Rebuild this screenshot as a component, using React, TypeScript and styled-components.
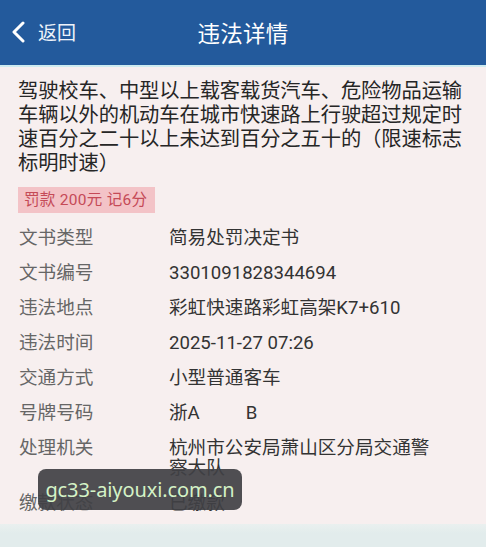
import React from "react";
import styled, { createGlobalStyle } from "styled-components";

const Global = createGlobalStyle`
  html, body { margin: 0; padding: 0; }
  body {
    width: 486px;
    height: 547px;
    overflow: hidden;
    background: #f7efef;
    font-family: Roboto, "Noto Sans CJK SC", "Noto Sans", sans-serif;
  }
`;

const Page = styled.div`
  position: relative;
  width: 486px;
  height: 547px;
  display: flex;
  flex-direction: column;
  background: #f7efef;
  overflow: hidden;
`;

const Header = styled.header`
  flex: none;
  height: 67px;
  box-sizing: border-box;
  background: #235a9c;
  border-bottom: 2px solid #cdebf0;
  display: grid;
  grid-template-columns: 1fr auto 1fr;
  align-items: center;
  padding-bottom: 2px;
  color: #fff;
`;

const Back = styled.div`
  display: flex;
  align-items: center;
  gap: 12px;
  padding-left: 11px;
  font-size: 19px;
  color: #eef3fa;
`;

const Title = styled.h1`
  margin: 0;
  font-size: 22.5px;
  font-weight: 400;
  letter-spacing: 0.3px;
  color: #fff;
`;

const Content = styled.main`
  flex: 1;
  padding: 12px 18px 0 18px;
  display: flex;
  flex-direction: column;
`;

const Desc = styled.p`
  margin: 0;
  font-size: 20.3px;
  line-height: 24px;
  color: #262626;
  letter-spacing: -0.1px;
`;

const Badge = styled.span`
  align-self: flex-start;
  margin-top: 12px;
  background: #f3c3c7;
  color: #c54a57;
  font-size: 15.5px;
  line-height: 26px;
  padding: 0 8px 0 6px;
  letter-spacing: 0.3px;
`;

const Rows = styled.div`
  margin-top: 7px;
  display: flex;
  flex-direction: column;
`;

const Row = styled.div`
  display: grid;
  grid-template-columns: 151px 1fr;
  padding: 7.5px 0;
  font-size: 18.6px;
  line-height: 20px;
`;

const Label = styled.span`
  color: #666;
  padding-left: 1px;
`;

const Value = styled.span`
  color: #333;
  white-space: pre;
`;

const WrapValue = styled.span`
  color: #333;
  width: 270px;
`;

const Footer = styled.div`
  height: 23px;
  flex: none;
  background: linear-gradient(#eaf0ef, #e2ecec 40%);
`;

const Watermark = styled.div`
  position: absolute;
  left: 38px;
  top: 469px;
  width: 204px;
  height: 41px;
  border-radius: 8px;
  background: rgba(64, 64, 68, 0.92);
  color: #d4f2c6;
  font-family: "Noto Sans", "DejaVu Sans", sans-serif;
  font-size: 20px;
  display: flex;
  align-items: center;
  justify-content: center;
  letter-spacing: -0.1px;
`;

const rows: [string, string][] = [
  ["文书类型", "简易处罚决定书"],
  ["文书编号", "3301091828344694"],
  ["违法地点", "彩虹快速路彩虹高架K7+610"],
  ["违法时间", "2025-11-27 07:26"],
  ["交通方式", "小型普通客车"],
  ["号牌号码", "浙A          B"],
];

export default function App() {
  return (
    <Page>
      <Global />
      <Header>
        <Back>
          <svg width="15" height="22" viewBox="0 0 15 22">
            <path d="M12 2 L3 11 L12 20" fill="none" stroke="#fff" strokeWidth="3" strokeLinecap="round" strokeLinejoin="round" />
          </svg>
          <span>返回</span>
        </Back>
        <Title>违法详情</Title>
        <div />
      </Header>
      <Content>
        <Desc>
          驾驶校车、中型以上载客载货汽车、危险物品运输车辆以外的机动车在城市快速路上行驶超过规定时速百分之二十以上未达到百分之五十的（限速标志标明时速）
        </Desc>
        <Badge>罚款 200元 记6分</Badge>
        <Rows>
          {rows.map(([l, v]) => (
            <Row key={l}>
              <Label>{l}</Label>
              <Value>{v}</Value>
            </Row>
          ))}
          <Row>
            <Label>处理机关</Label>
            <WrapValue>杭州市公安局萧山区分局交通警察大队</WrapValue>
          </Row>
          <Row>
            <Label>缴款状态</Label>
            <Value>已缴款</Value>
          </Row>
        </Rows>
      </Content>
      <Footer />
      <Watermark>gc33-aiyouxi.com.cn</Watermark>
    </Page>
  );
}
